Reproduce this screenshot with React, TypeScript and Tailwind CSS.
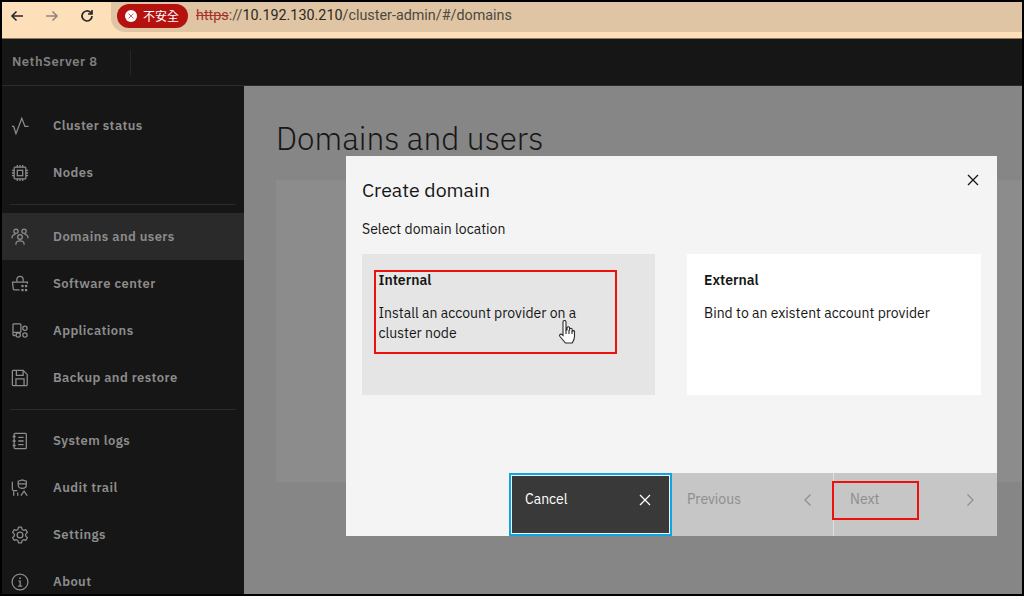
import React from "react";

const S = ({ children, size = 18, w = 1.4 }: { children: React.ReactNode; size?: number; w?: number }) => (
  <svg width={size} height={size} viewBox="0 0 20 20" fill="none" stroke="currentColor" strokeWidth={w} className="shrink-0">
    {children}
  </svg>
);

const icons: Record<string, React.ReactNode> = {
  activity: <S><path d="M1 10.500h2l2.500 8L12 1.500l3.500 9H19.500" /></S>,
  chip: <S><rect x="3.500" y="3.500" width="13" height="13" rx="1" /><rect x="7" y="7" width="6" height="6" /><path d="M7 1v2.500M10 1v2.500M13 1v2.500M7 16.500V19M10 16.500V19M13 16.500V19M1 7h2.500M1 10h2.500M1 13h2.500M16.500 7H19M16.500 10H19M16.500 13H19" /></S>,
  users: <S><circle cx="5.500" cy="3.600" r="2.400" /><circle cx="14.500" cy="3.600" r="2.400" /><circle cx="10" cy="10" r="2.600" /><path d="M1 11.500c0-3 2-4.500 4-4.500M19 11.500c0-3-2-4.500-4-4.500M5.500 18.500v-1c0-2 2-3.200 4.500-3.200s4.500 1.200 4.500 3.200v1" /></S>,
  store: <S><path d="M6.500 7.500V5a3.500 3.500 0 0 1 7 0v2.500" /><path d="M9.500 16.500H3.500a1 1 0 0 1-1-1l-.8-7.500h16.600l-.2 1.500" /><g fill="currentColor" stroke="none"><rect x="11.500" y="11" width="2.500" height="2.500" /><rect x="15.500" y="11" width="2.500" height="2.500" /><rect x="11.500" y="15.500" width="2.500" height="2.500" /><rect x="15.500" y="15.500" width="2.500" height="2.500" /></g></S>,
  apps: <S><rect x="2.200" y="2" width="8.800" height="9.500" rx="1" /><path d="M2.200 11.500v2.500a1 1 0 0 0 1 1h1.800" /><circle cx="15.500" cy="7" r="2.400" /><circle cx="8" cy="14.500" r="2.400" /><circle cx="15.500" cy="14.500" r="2.400" /></S>,
  save: <S><path d="M2.500 1.500h11l4.500 4.500v11.500a1 1 0 0 1-1 1h-14.500a1 1 0 0 1-1-1v-15a1 1 0 0 1 1-1z" /><path d="M6 1.500v5.500h7.500V1.500M5.500 18.500v-7.500h9v7.500" /></S>,
  logs: <S><rect x="3.500" y="1.500" width="13.500" height="17" rx="1" /><path d="M1.800 5h3.400M1.800 10h3.400M1.800 15h3.400M8 6h6M8 10h6M8 14h6" /></S>,
  audit: <S><path d="M1.500 3v8a2 2 0 0 0 2 2h3.500" /><path d="M8 2.500L12.500 1 17 2.500v4.500c0 2-2 3.500-4.500 3.500S8 9 8 7z" /><path d="M8 5.500h9M3 18.500V13.500M7.500 18.500V15M11 18.500l3.500-5 3.500 5" /></S>,
  gear: <S><circle cx="10" cy="10" r="3.200" /><path d="M8.300 1.300h3.400l.6 2.500 1.700 1 2.500-.7 1.700 3-1.900 1.900v2l1.900 1.900-1.700 3-2.500-.7-1.700 1-.6 2.500H8.300l-.6-2.500-1.700-1-2.500.7-1.700-3L3.700 11V9L1.800 7.100l1.700-3 2.500.7 1.700-1z" strokeLinejoin="round" /></S>,
  info: <S><circle cx="10" cy="10" r="8.800" /><path d="M10 5v1.600" strokeWidth="1.900" /><path d="M8.300 9h1.900v5.500M7.800 14.500h4.700" /></S>,
};

const Item = ({ icon, label, active }: { icon: string; label: string; active?: boolean }) => (
  <div className={`flex h-[47px] items-center pl-[9px] text-[#8d8d8d] ${active ? "bg-[#2a2a2a]" : ""}`}>
    {icons[icon]}
    <span className="ml-[24px] text-[13px] font-semibold tracking-[0.42px]">{label}</span>
  </div>
);

const X = ({ size = 16, className = "" }: { size?: number; className?: string }) => (
  <svg width={size} height={size} viewBox="0 0 16 16" fill="none" stroke="currentColor" strokeWidth="1.300" className={className}>
    <path d="M3 3l10 10M13 3L3 13" />
  </svg>
);

export default function App() {
  return (
    <div className="relative flex h-[596px] w-[1024px] flex-col overflow-hidden border-x-2 border-y-2 border-black bg-black font-['IBM_Plex_Sans','Noto_Sans','Noto_Sans_CJK_TC',sans-serif]">
      <div className="flex h-[37px] shrink-0 items-start border-b border-[#8a7a66] bg-[#fddfb9] pl-[7px]">
        <svg width="16" height="16" viewBox="0 0 16 16" fill="none" stroke="#2a2a2a" strokeWidth="1.600" className="mt-[6px]"><path d="M14 8H3M7.500 3.500L3 8l4.500 4.500" /></svg>
        <svg width="16" height="16" viewBox="0 0 16 16" fill="none" stroke="#91877a" strokeWidth="1.600" className="ml-[19px] mt-[6px]"><path d="M2 8h11M8.500 3.500L13 8l-4.500 4.500" /></svg>
        <svg width="16" height="16" viewBox="0 0 16 16" fill="none" stroke="#2a2a2a" strokeWidth="1.700" className="ml-[19px] mt-[6px]"><path d="M13 8a5 5 0 1 1-1.500-3.600L13 6M13 2v4H9" /></svg>
        <div className="ml-[16px] flex h-[30px] flex-1 items-start rounded-bl-[14px] bg-[#dfc5a3] pl-[6px] pt-[2px]">
          <div className="flex h-[24px] w-[71px] items-center rounded-full bg-[#b5110e] pl-[8px] text-[12px] text-white">
            <span className="flex h-[12px] w-[12px] items-center justify-center rounded-full bg-white">
              <X size={8} className="text-[#b5110e]" />
            </span>
            <span className="ml-[6px] font-['Noto_Sans_CJK_TC',sans-serif]">不安全</span>
          </div>
          <span className="ml-[8px] font-['Roboto',sans-serif] text-[14.35px] leading-[24px] text-[#4e4840]">
            <span className="text-[#a5352c] line-through">https</span>
            <span>://</span>
            <span className="text-[#2b2823]">10.192.130.210</span>
            <span>/cluster-admin/#/domains</span>
          </span>
        </div>
      </div>
      <div className="flex h-[47px] shrink-0 items-center border-b border-[#2a2a2a] bg-[#161616]">
        <span className="ml-[10px] text-[13px] font-semibold tracking-[0.5px] text-[#808080]">NethServer 8</span>
        <div className="ml-[33px] h-[25px] w-px bg-[#262626]" />
      </div>
      <div className="flex min-h-0 flex-1">
        <aside className="w-[242px] shrink-0 bg-[#161616] pt-[16px]">
          <Item icon="activity" label="Cluster status" />
          <Item icon="chip" label="Nodes" />
          <div className="mx-[8px] my-[8px] h-px bg-[#2b2b2b]" />
          <Item icon="users" label="Domains and users" active />
          <Item icon="store" label="Software center" />
          <Item icon="apps" label="Applications" />
          <Item icon="save" label="Backup and restore" />
          <div className="mx-[8px] mb-[7px] mt-[8px] h-px bg-[#2b2b2b]" />
          <Item icon="logs" label="System logs" />
          <Item icon="audit" label="Audit trail" />
          <Item icon="gear" label="Settings" />
          <Item icon="info" label="About" />
        </aside>
        <main className="relative min-w-0 flex-1 bg-[#868686] pl-[32px] pt-[32px]">
          <h1 className="text-[31.6px] font-light leading-[42px] text-[#171717]">Domains and users</h1>
          <div className="mt-[20px] h-[302px] bg-[#8c8c8c]" />
        </main>
      </div>

      {/* modal overlay */}
      <div className="absolute left-[344px] top-[154px] flex h-[380px] w-[651px] flex-col bg-[#f4f4f4] text-[#161616]">
        <button className="absolute right-[16px] top-[16px]"><X size={16} /></button>
        <div className="flex-1 px-[16px]">
          <h2 className="mt-[21px] text-[19.5px] leading-[26px]">Create domain</h2>
          <p className="mt-[16px] text-[14px] leading-[20px]">Select domain location</p>
          <div className="mt-[15px] flex gap-[32px]">
            <div className="h-[141px] w-[293px] bg-[#e5e5e5] pl-[16.500px] pt-[16px] text-[14px] leading-[20px]">
              <div className="font-semibold">Internal</div>
              <div className="mt-[13px] w-[230px]">Install an account provider on a cluster node</div>
            </div>
            <div className="h-[141px] w-[294px] bg-white pl-[17px] pt-[16px] text-[14px] leading-[20px]">
              <div className="font-semibold">External</div>
              <div className="mt-[13px]">Bind to an existent account provider</div>
            </div>
          </div>
        </div>
        <div className="ml-[163px] flex h-[63px] text-[14px]">
          <div className="box-border flex w-[163px] items-start justify-between border-2 border-[#0ea5e0] bg-[#393939] pl-[14px] pr-[17px] pt-[14px] text-white shadow-[inset_0_0_0_1px_#f4f4f4]">
            <span>Cancel</span>
            <X size={16} className="mt-[3px]" />
          </div>
          <div className="flex w-[161px] items-start justify-between bg-[#c6c6c6] pl-[15px] pr-[17px] pt-[16px] text-[#8d8d8d]">
            <span>Previous</span>
            <svg width="16" height="16" viewBox="0 0 16 16" fill="none" stroke="currentColor" strokeWidth="1.200" className="mt-[3px]"><path d="M10.500 2.500L5 8l5.500 5.500" /></svg>
          </div>
          <div className="flex w-[164px] items-start justify-between border-l border-[#e0e0e0] bg-[#c6c6c6] pl-[16px] pr-[19px] pt-[16px] text-[#8d8d8d]">
            <span>Next</span>
            <svg width="16" height="16" viewBox="0 0 16 16" fill="none" stroke="currentColor" strokeWidth="1.200" className="mt-[3px]"><path d="M5.500 2.500L11 8l-5.500 5.500" /></svg>
          </div>
        </div>
      </div>

      {/* annotation rectangles */}
      <div className="absolute left-[372px] top-[268px] h-[84px] w-[243px] border-2 border-[#ee0f0f]" />
      <div className="absolute left-[830px] top-[479px] h-[39px] w-[87px] border-2 border-[#ee0f0f]" />
      {/* cursor */}
      <svg width="18" height="26" viewBox="0 0 18 26" className="absolute left-[556px] top-[318px]" fill="#fff" stroke="#2a2a2a" strokeWidth="1.100">
        <path d="M5 2a1.500 1.500 0 0 1 3 0v8l1 0V8a1.300 1.300 0 0 1 2.600 0v2.500V9.500a1.300 1.300 0 0 1 2.600 0v2a1.200 1.200 0 0 1 2.300 0v5c0 3-1 4.500-2.300 6.500H7.500L2 16.500c-1-1.500 0-3 2-2l1 1z" />
        <path d="M8 10v4M11 10v4M14 11v3" />
      </svg>
    </div>
  );
}
